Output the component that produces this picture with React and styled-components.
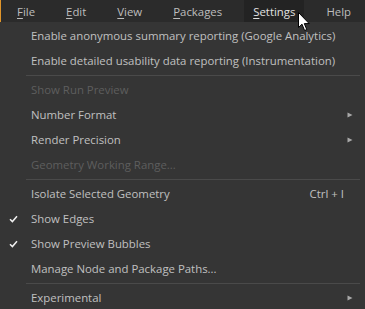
import styled, { createGlobalStyle } from "styled-components";

const menuBar = [
  { label: "File", key: "F" },
  { label: "Edit", key: "E" },
  { label: "View", key: "V" },
  { label: "Packages", key: "P" },
  { label: "Settings", key: "S", open: true },
  { label: "Help" },
];

const settings = [
  { label: "Enable anonymous summary reporting (Google Analytics)" },
  { label: "Enable detailed usability data reporting (Instrumentation)" },
  { sep: true },
  { label: "Show Run Preview", disabled: true },
  { label: "Number Format", sub: true },
  { label: "Render Precision", sub: true },
  { label: "Geometry Working Range...", disabled: true },
  { sep: true },
  { label: "Isolate Selected Geometry", shortcut: "Ctrl + I" },
  { label: "Show Edges", checked: true },
  { label: "Show Preview Bubbles", checked: true },
  { label: "Manage Node and Package Paths..." },
  { sep: true },
  { label: "Experimental", sub: true },
];

export default function App() {
  return (
    <>
      <GlobalStyle />
      <Window>
        <Bar>
          {menuBar.map((m) => (
            <BarItem key={m.label} $open={m.open}>
              {m.key ? (
                <>
                  <u>{m.label[0]}</u>
                  {m.label.slice(1)}
                </>
              ) : (
                m.label
              )}
            </BarItem>
          ))}
        </Bar>
        <Dropdown>
          {settings.map((item, i) =>
            item.sep ? (
              <Separator key={i} />
            ) : (
              <Item key={i} $disabled={item.disabled}>
                <Check>{item.checked && <CheckIcon />}</Check>
                <Label>{item.label}</Label>
                {item.shortcut && <Shortcut>{item.shortcut}</Shortcut>}
                {item.sub && <Arrow />}
              </Item>
            )
          )}
        </Dropdown>
        <Cursor />
      </Window>
    </>
  );
}

/* ICONS */
function CheckIcon() {
  return (
    <svg width="9" height="8" viewBox="0 0 9 8">
      <path d="M1 4.2 L3.4 6.6 L8 1.2" fill="none" stroke="#f0f0f0" strokeWidth="1.5" />
    </svg>
  );
}

function Arrow() {
  return (
    <ArrowBox>
      <svg width="6" height="6" viewBox="0 0 6 6">
        <path d="M0.5 0.5 L5.5 3 L0.5 5.5 Z" fill="#a8a8a8" />
      </svg>
    </ArrowBox>
  );
}

function Cursor() {
  return (
    <CursorBox>
      <svg width="13" height="20" viewBox="0 0 13 20">
        <path
          d="M0.5 0.5 L0.5 15.5 L4 12.2 L6.6 18.5 L8.8 17.6 L6.3 11.6 L11.2 11.6 Z"
          fill="#ffffff"
          stroke="#000000"
          strokeWidth="1"
          strokeLinejoin="miter"
        />
      </svg>
    </CursorBox>
  );
}

/* STYLES */
const GlobalStyle = createGlobalStyle`
  html, body {
    margin: 0;
    padding: 0;
    background: #353535;
  }
  body {
    font-family: "Open Sans", "Noto Sans", sans-serif;
  }
`;

const Window = styled.div`
  position: relative;
  width: 365px;
  height: 309px;
  overflow: hidden;
  background: #353535;
`;

const Bar = styled.div`
  display: flex;
  align-items: stretch;
  height: 22px;
  padding-left: 7px;
  gap: 13.5px;
  background: #2b2b2b;
  border-left: 1px solid #e0952a;
  box-sizing: border-box;
`;

const BarItem = styled.div`
  display: flex;
  align-items: center;
  padding: 0 8.5px 0 9px;
  font-size: 11.4px;
  color: ${(p) => (p.$open ? "#e0e0e0" : "#bdbdbd")};
  background: ${(p) => (p.$open ? "#232323" : "transparent")};
  u {
    text-decoration-thickness: 1px;
    text-underline-offset: 2px;
  }
`;

const Dropdown = styled.div`
  display: flex;
  flex-direction: column;
  padding-top: 1px;
`;

const Item = styled.div`
  display: flex;
  align-items: center;
  height: 25px;
  font-size: 11.4px;
  color: ${(p) => (p.$disabled ? "#5e5e5e" : "#c0c0c0")};
`;

const Check = styled.div`
  display: flex;
  align-items: center;
  justify-content: center;
  width: 26px;
`;

const Label = styled.span`
  flex: 1;
  padding-left: 5px;
  white-space: nowrap;
`;

const Shortcut = styled.span`
  padding-right: 21px;
`;

const ArrowBox = styled.span`
  display: flex;
  padding-right: 12px;
`;

const Separator = styled.div`
  height: 1px;
  margin: 1.5px 5px 1.5px 26px;
  background: #4a4a4a;
`;

const CursorBox = styled.div`
  position: absolute;
  left: 298px;
  top: 12px;
  line-height: 0;
`;
